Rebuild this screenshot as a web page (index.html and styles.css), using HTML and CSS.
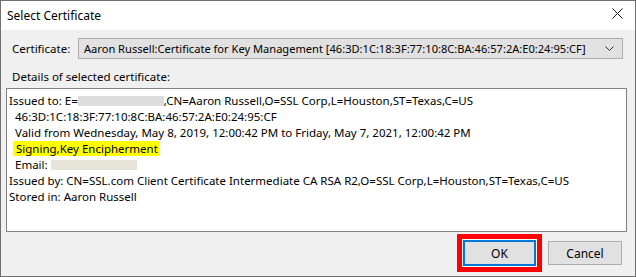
FILE: index.html
```html
<!DOCTYPE html>
<html lang="en">
<head>
    <meta charset="UTF-8">
    <title>Select Certificate</title>
    <link rel="stylesheet" href="styles.css">
</head>
<body>

    <!-- Dialog window -->
    <div class="window">
        <div class="title-bar">
            <span class="title">Select Certificate</span>
            <svg class="close" width="11" height="11" viewBox="0 0 11 11">
                <path d="M0.5 0.5 L10.5 10.5 M10.5 0.5 L0.5 10.5" stroke="#111" stroke-width="1" fill="none"/>
            </svg>
        </div>

        <div class="dialog-body">
            <div class="cert-row">
                <label class="label">Certificate:</label>
                <div class="combo">
                    <span class="combo-text">Aaron Russell:Certificate for Key Management [46:3D:1C:18:3F:77:10:8C:BA:46:57:2A:E0:24:95:CF]</span>
                    <svg class="chevron" width="9" height="5" viewBox="0 0 9 5">
                        <path d="M0.5 0.5 L4.5 4.5 L8.5 0.5" stroke="#333" stroke-width="1" fill="none"/>
                    </svg>
                </div>
            </div>

            <div class="details-label">Details of selected certificate:</div>

            <div class="details-box">
                <div class="line">Issued to: E=<span class="blur blur-mail"></span>,CN=Aaron Russell,O=SSL Corp,L=Houston,ST=Texas,C=US</div>
                <div class="line indent">46:3D:1C:18:3F:77:10:8C:BA:46:57:2A:E0:24:95:CF</div>
                <div class="line indent">Valid from Wednesday, May 8, 2019, 12:00:42 PM to Friday, May 7, 2021, 12:00:42 PM</div>
                <div class="line"><span class="highlight">Signing,Key Encipherment</span></div>
                <div class="line indent">Email: <span class="blur blur-email"></span></div>
                <div class="line">Issued by: CN=SSL.com Client Certificate Intermediate CA RSA R2,O=SSL Corp,L=Houston,ST=Texas,C=US</div>
                <div class="line">Stored in: Aaron Russell</div>
            </div>

            <div class="button-row">
                <button class="btn btn-ok">OK</button>
                <button class="btn">Cancel</button>
            </div>
        </div>
    </div>

</body>
</html>
```

FILE: styles.css
```css
body {
    margin: 0;
    padding: 0;
    font-family: "Segoe UI", "Noto Sans", sans-serif;
    font-size: 11.5px;
    color: #000;
    background: #f0f0f0;
}
.window {
    width: 636px;
    height: 277px;
    box-sizing: border-box;
    border: 1px solid #707070;
    display: flex;
    flex-direction: column;
    background: #f0f0f0;
}
/* Title bar */
.title-bar {
    height: 29px;
    background: #ffffff;
    display: flex;
    align-items: center;
    justify-content: space-between;
    padding: 0 12px 0 6px;
    flex-shrink: 0;
}
.title {
    font-size: 12px;
    margin-top: -1px;
}
.close {
    margin-top: -4px;
}
/* Body */
.dialog-body {
    padding: 8px 8px 0 5px;
    display: flex;
    flex-direction: column;
}
.cert-row {
    display: flex;
    align-items: center;
}
.label {
    width: 66px;
    padding-left: 6px;
    flex-shrink: 0;
}
.combo {
    width: 545px;
    height: 21px;
    box-sizing: border-box;
    border: 1px solid #adadad;
    background: #e1e1e1;
    display: flex;
    align-items: center;
    justify-content: space-between;
    padding: 0 8px 0 5px;
}
.combo-text {
    font-size: 11.1px;
    white-space: nowrap;
}
.details-label {
    padding-left: 6px;
    margin-top: 10px;
    line-height: 16px;
}
.details-box {
    margin-top: 3px;
    width: 621px;
    height: 144px;
    box-sizing: border-box;
    border: 1px solid #828282;
    background: #ffffff;
    padding: 4px 2px;
}
.line {
    line-height: 16px;
    height: 16px;
    white-space: nowrap;
}
.indent {
    padding-left: 6px;
}
.highlight {
    background: #ffff00;
    padding: 0 2px 0 3px;
    margin-left: 4px;
}
.blur {
    display: inline-block;
    height: 10px;
    vertical-align: -1px;
}
.blur-mail {
    width: 86px;
    background: #dcdcdc;
}
.blur-email {
    width: 86px;
    background: #e6e4d6;
}
/* Buttons */
.button-row {
    display: flex;
    justify-content: flex-end;
    align-items: center;
    gap: 12px;
    margin-top: 8px;
    padding-right: 5px;
}
.btn {
    font-family: inherit;
    font-size: 12px;
    width: 74px;
    height: 24px;
    background: #e1e1e1;
    border: 1px solid #adadad;
    color: #000;
    padding: 0;
}
.btn-ok {
    width: 73px;
    height: 26px;
    border: 2px solid #0078d7;
    box-shadow: 0 0 0 1px #ffffff, 0 0 0 6px #ff0000;
}
```
